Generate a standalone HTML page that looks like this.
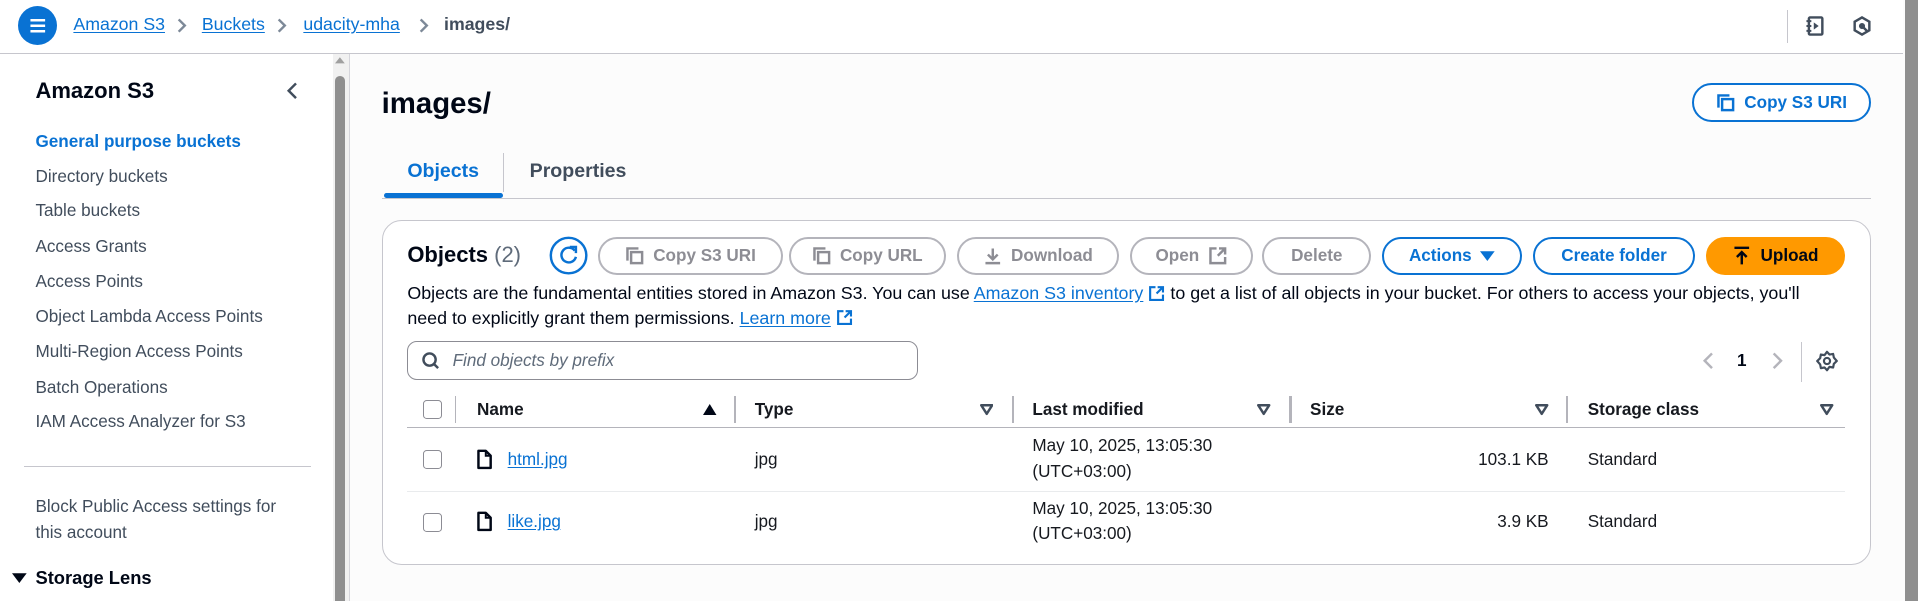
<!DOCTYPE html>
<html><head><meta charset="utf-8"><style>
html,body{margin:0;padding:0;width:1918px;height:601px;overflow:hidden;background:#fcfcfc}
#r{position:relative;width:1568px;height:492px;zoom:1.2232;font-family:"Liberation Sans",sans-serif;font-size:14px;color:#16191f;overflow:hidden;background:#fcfcfc}
.a{position:absolute;white-space:nowrap}
.t{position:absolute;white-space:nowrap;line-height:20px;height:20px}
.lk{color:#0972d3;text-decoration:underline;text-underline-offset:2px}
.b{font-weight:bold}
.btn{position:absolute;box-sizing:border-box;height:31px;border-radius:16px;border:2px solid #b4b4bb;color:#8d8d94;font-weight:bold;font-size:14px;display:flex;align-items:center;justify-content:center;gap:7px;white-space:nowrap;background:#fff}
.btn.p{border-color:#0972d3;color:#0972d3}
.nav{left:29px;font-size:14px;color:#414d5c}
.hd{top:325px;font-weight:bold;color:#16191f}
.dv{position:absolute;width:1px;background:#b4b4bb}
.cb{position:absolute;width:14px;height:14px;border:1.5px solid #8c8c94;border-radius:3px;background:#fff}
.bc{font-size:14.5px}
</style></head><body><div id="r">
<div class="a" style="left:0;top:0;width:1556px;height:43px;background:#fff;border-bottom:1px solid #c6c6cd"></div>
<div class="a" style="left:15px;top:5px;width:32px;height:32px;border-radius:50%;background:#0972d3"></div>
<svg class="a" style="left:23px;top:13px" width="16" height="16" viewBox="0 0 16 16"><path d="M2 3.5h12M2 8h12M2 12.5h12" stroke="#fff" stroke-width="2"/></svg>
<div class="t lk bc" style="left:60px;top:10px">Amazon S3</div>
<svg class="a" style="left:143px;top:14px" width="10" height="14"><path d="M3 2l5 5-5 5" stroke="#7d8998" stroke-width="2" fill="none"/></svg>
<div class="t lk bc" style="left:165px;top:10px">Buckets</div>
<svg class="a" style="left:225px;top:14px" width="10" height="14"><path d="M3 2l5 5-5 5" stroke="#7d8998" stroke-width="2" fill="none"/></svg>
<div class="t lk bc" style="left:248px;top:10px">udacity-mha</div>
<svg class="a" style="left:341px;top:14px" width="10" height="14"><path d="M3 2l5 5-5 5" stroke="#7d8998" stroke-width="2" fill="none"/></svg>
<div class="t bc" style="left:363px;top:10px;color:#414d5c;font-weight:bold">images/</div>
<div class="a" style="left:1461px;top:8px;width:1px;height:27px;background:#c6c6cd"></div>
<svg class="a" style="left:1475px;top:12px" width="18" height="18" viewBox="0 0 18 18"><rect x="4" y="2" width="11" height="14" rx="1" fill="none" stroke="#414d5c" stroke-width="2"/><path d="M2 5h4M2 9h4M2 13h4" stroke="#414d5c" stroke-width="1.6"/><path d="M8 6l4 3-4 3z" fill="#414d5c"/></svg>
<svg class="a" style="left:1513px;top:12px" width="18" height="18" viewBox="0 0 18 18"><path d="M9 2l6 3.5v7L9 16l-6-3.5v-7z" fill="none" stroke="#414d5c" stroke-width="2"/><circle cx="9" cy="9" r="2.5" fill="#414d5c"/><path d="M9 9l4 4" stroke="#414d5c" stroke-width="2"/></svg>
<div class="a" style="left:1557px;top:0;width:11px;height:492px;background:#8f8f8f"></div>
<div class="a" style="left:0;top:44px;width:272px;height:448px;background:#fff"></div>
<div class="a" style="left:272px;top:44px;width:13px;height:448px;background:#f1f1f1"></div>
<div class="a" style="left:274px;top:62px;width:8px;height:430px;background:#8f8f8f;border-radius:4px 4px 0 0"></div>
<svg class="a" style="left:274px;top:46px" width="8" height="8"><path d="M0 6L4 1 8 6z" fill="#a0a0a0"/></svg>
<div class="a" style="left:285px;top:44px;width:1px;height:448px;background:#d5d5db"></div>
<div class="t" style="left:29px;top:64px;font-size:18px;line-height:22px;font-weight:bold;color:#000716">Amazon S3</div>
<svg class="a" style="left:233px;top:66px" width="12" height="16"><path d="M9 2L3 8l6 6" stroke="#414d5c" stroke-width="2" fill="none"/></svg>
<div class="t nav b" style="top:106px;color:#0972d3">General purpose buckets</div>
<div class="t nav" style="top:135px">Directory buckets</div>
<div class="t nav" style="top:163px">Table buckets</div>
<div class="t nav" style="top:192px">Access Grants</div>
<div class="t nav" style="top:221px">Access Points</div>
<div class="t nav" style="top:249px">Object Lambda Access Points</div>
<div class="t nav" style="top:278px">Multi-Region Access Points</div>
<div class="t nav" style="top:307px">Batch Operations</div>
<div class="t nav" style="top:335px">IAM Access Analyzer for S3</div>
<div class="a" style="left:20px;top:381px;width:234px;height:1px;background:#c6c6cd"></div>
<div class="t nav" style="top:405px">Block Public Access settings for</div>
<div class="t nav" style="top:426px">this account</div>
<svg class="a" style="left:10px;top:468px" width="12" height="10"><path d="M0 1h12L6 9z" fill="#000716"/></svg>
<div class="t b" style="left:29px;top:463px;font-size:15px;color:#000716">Storage Lens</div>
<div class="t b" style="left:312px;top:70px;font-size:24px;line-height:30px;height:30px;color:#000716">images/</div>
<div class="btn p" style="left:1383px;top:68px;width:147px;height:32px"><svg width="16" height="16" viewBox="0 0 16 16"><path d="M2 12V2h9" stroke="#0972d3" stroke-width="2" fill="none"/><rect x="5" y="5" width="9" height="9" fill="none" stroke="#0972d3" stroke-width="2"/></svg>Copy S3 URI</div>
<div class="t b" style="left:333px;top:130px;font-size:16px;color:#0972d3">Objects</div>
<div class="a" style="left:314px;top:158px;width:97px;height:4px;background:#0972d3;border-radius:2px"></div>
<div class="a" style="left:411px;top:125px;width:1px;height:32px;background:#c6c6cd"></div>
<div class="t b" style="left:433px;top:130px;font-size:16px;color:#414d5c">Properties</div>
<div class="a" style="left:312px;top:162px;width:1218px;height:1px;background:#c6c6cd"></div>
<div class="a" style="left:312px;top:180px;width:1216px;height:280px;border:1px solid #c6c6cd;border-radius:16px;background:#fff"></div>
<div class="t b" style="left:333px;top:198px;font-size:18px;line-height:22px;color:#000716">Objects <span style="font-weight:normal;color:#5f6b7a">(2)</span></div>
<svg class="a" style="left:449px;top:193px" width="32" height="32" viewBox="0 0 32 32"><circle cx="16" cy="16" r="14.5" fill="#fff" stroke="#0972d3" stroke-width="2"/><path d="M21 12a6 6 0 1 0 1 5" stroke="#0972d3" stroke-width="2" fill="none"/><path d="M17 9h5v5" stroke="#0972d3" stroke-width="2" fill="none"/></svg>
<div class="btn" style="left:489px;top:194px;width:151px"><svg width="16" height="16" viewBox="0 0 16 16"><path d="M2 12V2h9" stroke="#8d8d94" stroke-width="2" fill="none"/><rect x="5" y="5" width="9" height="9" fill="none" stroke="#8d8d94" stroke-width="2"/></svg>Copy S3 URI</div>
<div class="btn" style="left:645px;top:194px;width:128px"><svg width="16" height="16" viewBox="0 0 16 16"><path d="M2 12V2h9" stroke="#8d8d94" stroke-width="2" fill="none"/><rect x="5" y="5" width="9" height="9" fill="none" stroke="#8d8d94" stroke-width="2"/></svg>Copy URL</div>
<div class="btn" style="left:782px;top:194px;width:133px"><svg width="16" height="16" viewBox="0 0 16 16"><path d="M8 2v9M4 7l4 4 4-4M2 14h12" stroke="#8d8d94" stroke-width="2" fill="none"/></svg>Download</div>
<div class="btn" style="left:924px;top:194px;width:100px">Open <svg width="16" height="16" viewBox="0 0 16 16"><path d="M7 2H2v12h12V9" stroke="#8d8d94" stroke-width="2" fill="none"/><path d="M9 2h5v5M14 2L8 8" stroke="#8d8d94" stroke-width="2" fill="none"/></svg></div>
<div class="btn" style="left:1032px;top:194px;width:89px">Delete</div>
<div class="btn p" style="left:1130px;top:194px;width:114px">Actions <svg width="12" height="10"><path d="M0 1h12L6 9z" fill="#0972d3"/></svg></div>
<div class="btn p" style="left:1253px;top:194px;width:133px">Create folder</div>
<div class="btn" style="left:1395px;top:194px;width:113px;background:#ff9900;border-color:#ff9900;color:#000716"><svg width="16" height="16" viewBox="0 0 16 16"><path d="M2 1.5h12M8 15V5M4 9l4-4 4 4" stroke="#000716" stroke-width="2" fill="none"/></svg>Upload</div>
<div class="t" style="left:333px;top:230px;font-size:14.6px;color:#000716">Objects are the fundamental entities stored in Amazon S3. You can use <span class="lk">Amazon S3 inventory</span> <svg width="14" height="14" viewBox="0 0 16 16" style="vertical-align:-2px"><path d="M7 2H2v12h12V9" stroke="#0972d3" stroke-width="2" fill="none"/><path d="M9 2h5v5M14 2L8 8" stroke="#0972d3" stroke-width="2" fill="none"/></svg> to get a list of all objects in your bucket. For others to access your objects, you'll</div>
<div class="t" style="left:333px;top:250px;font-size:14.6px;color:#000716">need to explicitly grant them permissions. <span class="lk">Learn more</span> <svg width="14" height="14" viewBox="0 0 16 16" style="vertical-align:-2px"><path d="M7 2H2v12h12V9" stroke="#0972d3" stroke-width="2" fill="none"/><path d="M9 2h5v5M14 2L8 8" stroke="#0972d3" stroke-width="2" fill="none"/></svg></div>
<div class="a" style="left:333px;top:279px;width:416px;height:30px;border:1px solid #8c8c94;border-radius:8px;background:#fff"></div>
<svg class="a" style="left:344px;top:287px" width="16" height="16" viewBox="0 0 16 16"><circle cx="7" cy="7" r="5" fill="none" stroke="#414d5c" stroke-width="2"/><path d="M10.5 10.5L14 14" stroke="#414d5c" stroke-width="2"/></svg>
<div class="t" style="left:370px;top:285px;font-style:italic;color:#5f6b7a;font-size:14px">Find objects by prefix</div>
<svg class="a" style="left:1391px;top:287px" width="12" height="16"><path d="M9 2L3 8l6 6" stroke="#b4b4bb" stroke-width="2" fill="none"/></svg>
<div class="t b" style="left:1420px;top:285px;color:#000716">1</div>
<svg class="a" style="left:1447px;top:287px" width="12" height="16"><path d="M3 2l6 6-6 6" stroke="#b4b4bb" stroke-width="2" fill="none"/></svg>
<div class="a" style="left:1472px;top:280px;width:1px;height:32px;background:#c6c6cd"></div>
<svg class="a" style="left:1485px;top:286px" width="18" height="18" viewBox="0 0 18 18"><circle cx="9" cy="9" r="2.5" fill="none" stroke="#414d5c" stroke-width="1.8"/><path d="M9 1.5l2 2.2 3-.5.6 3L17 9l-2.4 2.3-.6 3-3-.5L9 16.5l-2-2.2-3 .5-.6-3L1 9l2.4-2.3.6-3 3 .5z" fill="none" stroke="#414d5c" stroke-width="1.8" stroke-linejoin="round"/></svg>
<div class="cb" style="left:346px;top:327px"></div>
<div class="dv" style="left:372px;top:324px;height:22px"></div>
<div class="t hd" style="left:390px">Name</div>
<svg class="a" style="left:575px;top:330px" width="11" height="10"><path d="M0 9h11L5.5 0z" fill="#000716"/></svg>
<div class="dv" style="left:600px;top:324px;height:22px;width:2px"></div>
<div class="t hd" style="left:617px">Type</div>
<svg class="a" style="left:801px;top:330px" width="11" height="10"><path d="M1 1h9L5.5 8z" fill="none" stroke="#414d5c" stroke-width="2" stroke-linejoin="round"/></svg>
<div class="dv" style="left:827px;top:324px;height:22px;width:2px"></div>
<div class="t hd" style="left:844px">Last modified</div>
<svg class="a" style="left:1028px;top:330px" width="11" height="10"><path d="M1 1h9L5.5 8z" fill="none" stroke="#414d5c" stroke-width="2" stroke-linejoin="round"/></svg>
<div class="dv" style="left:1054px;top:324px;height:22px;width:2px"></div>
<div class="t hd" style="left:1071px">Size</div>
<svg class="a" style="left:1255px;top:330px" width="11" height="10"><path d="M1 1h9L5.5 8z" fill="none" stroke="#414d5c" stroke-width="2" stroke-linejoin="round"/></svg>
<div class="dv" style="left:1280px;top:324px;height:22px;width:2px"></div>
<div class="t hd" style="left:1298px">Storage class</div>
<svg class="a" style="left:1488px;top:330px" width="11" height="10"><path d="M1 1h9L5.5 8z" fill="none" stroke="#414d5c" stroke-width="2" stroke-linejoin="round"/></svg>
<div class="a" style="left:333px;top:349px;width:1175px;height:1px;background:#b4b4bb"></div>
<div class="cb" style="left:346px;top:368px"></div>
<svg class="a" style="left:389px;top:367px" width="14" height="17" viewBox="0 0 14 17"><path d="M2 1.5h6l4 4v10H2z" fill="none" stroke="#000716" stroke-width="2" stroke-linejoin="round"/><path d="M8 1.5v4h4" fill="none" stroke="#000716" stroke-width="1.6"/></svg>
<div class="t lk" style="left:415px;top:366px">html.jpg</div>
<div class="t" style="left:617px;top:366px">jpg</div>
<div class="t" style="left:844px;top:355px">May 10, 2025, 13:05:30</div>
<div class="t" style="left:844px;top:376px">(UTC+03:00)</div>
<div class="t" style="left:1166px;top:366px;width:100px;text-align:right">103.1 KB</div>
<div class="t" style="left:1298px;top:366px">Standard</div>
<div class="a" style="left:333px;top:401px;width:1175px;height:1px;background:#e9ebed"></div>
<div class="cb" style="left:346px;top:419px"></div>
<svg class="a" style="left:389px;top:418px" width="14" height="17" viewBox="0 0 14 17"><path d="M2 1.5h6l4 4v10H2z" fill="none" stroke="#000716" stroke-width="2" stroke-linejoin="round"/><path d="M8 1.5v4h4" fill="none" stroke="#000716" stroke-width="1.6"/></svg>
<div class="t lk" style="left:415px;top:417px">like.jpg</div>
<div class="t" style="left:617px;top:417px">jpg</div>
<div class="t" style="left:844px;top:406px">May 10, 2025, 13:05:30</div>
<div class="t" style="left:844px;top:427px">(UTC+03:00)</div>
<div class="t" style="left:1166px;top:417px;width:100px;text-align:right">3.9 KB</div>
<div class="t" style="left:1298px;top:417px">Standard</div>
</div></body></html>
